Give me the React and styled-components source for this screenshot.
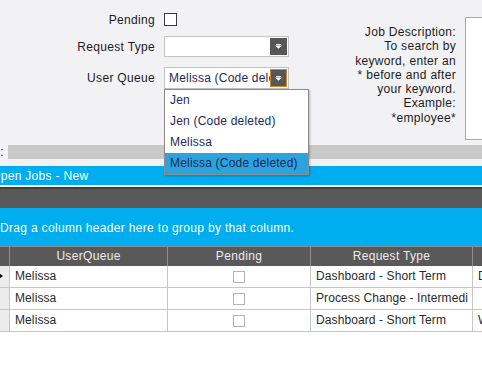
import styled, { createGlobalStyle } from "styled-components";

const GlobalStyle = createGlobalStyle`
	html, body {
		margin: 0;
		padding: 0;
		background: #ffffff;
	}
	body {
		font-family: "Liberation Sans", Arial, sans-serif;
		font-size: 12px;
		letter-spacing: 0.32px;
	}
`;

const queueOptions = ["Jen", "Jen (Code deleted)", "Melissa", "Melissa (Code deleted)"];

const jobs = [
	{ queue: "Melissa", type: "Dashboard - Short Term", extra: "D", current: true },
	{ queue: "Melissa", type: "Process Change - Intermedi", extra: "" },
	{ queue: "Melissa", type: "Dashboard - Short Term", extra: "W" },
];

const columns = ["UserQueue", "Pending", "Request Type", ""];

const ArrowIcon = () => (
	<svg width="7" height="5" viewBox="0 0 7 5">
		<rect x="1" y="0" width="5" height="1" fill="#ffffff" />
		<polygon points="0,1.5 7,1.5 3.5,4.8" fill="#ffffff" />
	</svg>
);

const Select = ({ value, focused, children }) => (
	<SelectBox $focused={focused}>
		<SelectText>{value}</SelectText>
		<DropButton $focused={focused}>
			<ArrowIcon />
		</DropButton>
		{children}
	</SelectBox>
);

const App = () => {
	return (
		<>
			<GlobalStyle />
			<Page>
				<FormArea>
					<FieldGrid>
						<Label>Pending</Label>
						<Cell>
							<CheckBox />
						</Cell>
						<Label>Request Type</Label>
						<Select value="" />
						<Label>User Queue</Label>
						<Select value="Melissa (Code deleted)" focused>
							<DropMenu>
								{queueOptions.map((opt, i) => (
									<MenuItem key={opt} $active={i === queueOptions.length - 1}>
										{opt}
									</MenuItem>
								))}
							</DropMenu>
						</Select>
					</FieldGrid>
					<JobHelp>
						Job Description:
						<br />
						To search by
						<br />
						keyword, enter an
						<br />* before and after
						<br />
						your keyword.
						<br />
						Example:
						<br />
						*employee*
					</JobHelp>
					<TextBox />
				</FormArea>
				<FilterRow>
					<FilterLabel>
						<span>Status:</span>
					</FilterLabel>
					<FilterBar />
				</FilterRow>
				<TitleBar>
					<TitleText>Open Jobs - New</TitleText>
				</TitleBar>
				<ToolBar />
				<GroupPanel>Drag a column header here to group by that column.</GroupPanel>
				<Table>
					<HeadCell />
					{columns.map((c, i) => (
						<HeadCell key={i}>{c}</HeadCell>
					))}
					{jobs.map((job, i) => (
						<Row key={i}>
							<Indicator>{job.current && <RowArrow />}</Indicator>
							<DataCell>{job.queue}</DataCell>
							<DataCell $center>
								<GridCheck />
							</DataCell>
							<DataCell>{job.type}</DataCell>
							<DataCell>{job.extra}</DataCell>
						</Row>
					))}
				</Table>
			</Page>
		</>
	);
};

const Page = styled.div`
	width: 482px;
	height: 375px;
	overflow: hidden;
	background: #ffffff;
	color: #222222;
	position: relative;
`;

const FormArea = styled.div`
	display: flex;
	height: 145px;
	background: #f2f2f4;
`;

const FieldGrid = styled.div`
	display: grid;
	grid-template-columns: 155px 125px;
	grid-template-rows: 13px 21px 22px;
	column-gap: 9px;
	row-gap: 10px;
	padding-top: 13px;
	flex-shrink: 0;
	align-items: center;
	align-content: start;
`;

const Label = styled.div`
	text-align: right;
	color: #1c1c1c;
	white-space: nowrap;
	line-height: 14px;
`;

const Cell = styled.div`
	display: flex;
	align-items: center;
	height: 100%;
`;

const CheckBox = styled.div`
	width: 11px;
	height: 11px;
	border: 1px solid #3a3a3a;
	background: #ffffff;
`;

const SelectBox = styled.div`
	position: relative;
	display: flex;
	height: 100%;
	box-sizing: border-box;
	border: 1px solid #c4c4c4;
	background: #ffffff;
	padding: 1px;
`;

const SelectText = styled.div`
	flex: 1;
	overflow: hidden;
	white-space: nowrap;
	color: #1f2a55;
	padding-left: 3px;
	line-height: 18px;
	letter-spacing: 0.2px;
`;

const DropButton = styled.div`
	width: 17px;
	flex-shrink: 0;
	box-sizing: border-box;
	background: #575757;
	border: 1px solid ${({ $focused }) => ($focused ? "#d08a2c" : "#575757")};
	display: flex;
	align-items: center;
	justify-content: center;
`;

const DropMenu = styled.div`
	position: absolute;
	top: 21px;
	left: -1px;
	width: 145px;
	box-sizing: border-box;
	background: #ffffff;
	border: 1px solid #8c8c8c;
	box-shadow: 1px 1px 2px rgba(0, 0, 0, 0.25);
	z-index: 10;
`;

const MenuItem = styled.div`
	height: 21px;
	line-height: 21px;
	padding-left: 5px;
	color: #1f2a55;
	white-space: nowrap;
	letter-spacing: 0.2px;
	background: ${({ $active }) => ($active ? "#2aa3de" : "#ffffff")};
`;

const JobHelp = styled.div`
	width: 167px;
	flex-shrink: 0;
	text-align: right;
	padding-top: 25px;
	line-height: 14.3px;
	color: #1c1c1c;
`;

const TextBox = styled.div`
	width: 40px;
	height: 123px;
	flex-shrink: 0;
	margin-left: 9px;
	margin-top: 17px;
	box-sizing: border-box;
	border: 1px solid #a8a8a8;
	background: #ffffff;
`;

const FilterRow = styled.div`
	display: flex;
	height: 21px;
	background: #f2f2f4;
	align-items: flex-start;
`;

const FilterLabel = styled.div`
	width: 4px;
	margin-right: 4px;
	flex-shrink: 0;
	display: flex;
	justify-content: flex-end;
	overflow: hidden;
	white-space: nowrap;
	line-height: 14px;
	color: #1c1c1c;
`;

const FilterBar = styled.div`
	flex: 1;
	height: 14px;
	background: #c9c9c9;
`;

const TitleBar = styled.div`
	height: 19px;
	background: #00adef;
	border-bottom: 2px solid #ffffff;
	display: flex;
	align-items: center;
	overflow: hidden;
`;

const TitleText = styled.span`
	color: #ffffff;
	margin-left: -9px;
	white-space: nowrap;
`;

const ToolBar = styled.div`
	height: 19px;
	background: #595959;
	border-top: 2px solid #3e3e3e;
`;

const GroupPanel = styled.div`
	height: 38px;
	background: #00adef;
	color: #ffffff;
	display: flex;
	align-items: center;
	padding-top: 1px;
	box-sizing: border-box;
	white-space: nowrap;
`;

const Table = styled.div`
	display: grid;
	grid-template-columns: 10px 158px 143px 162px 60px;
	grid-auto-rows: 22px;
	grid-template-rows: 20px;
`;

const HeadCell = styled.div`
	background: #595959;
	color: #ececec;
	text-align: center;
	line-height: 19px;
	border-top: 1px solid #8e8e8e;
	border-right: 1px solid #8e8e8e;
	box-sizing: border-box;
	white-space: nowrap;
	overflow: hidden;
`;

const Row = styled.div`
	display: contents;
`;

const Indicator = styled.div`
	background: #ececec;
	border-right: 1px solid #c6c6c6;
	border-bottom: 1px solid #c6c6c6;
	box-sizing: border-box;
	position: relative;
	overflow: hidden;
`;

const RowArrow = styled.div`
	position: absolute;
	left: -1px;
	top: 7px;
	width: 0;
	height: 0;
	border-top: 3px solid transparent;
	border-bottom: 3px solid transparent;
	border-left: 4px solid #111111;
`;

const DataCell = styled.div`
	background: #ffffff;
	border-right: 1px solid #c6c6c6;
	border-bottom: 1px solid #c6c6c6;
	box-sizing: border-box;
	padding-left: 5px;
	line-height: 21px;
	white-space: nowrap;
	overflow: hidden;
	color: #2a2a2a;
	letter-spacing: 0.1px;
	display: flex;
	align-items: center;
	justify-content: ${({ $center }) => ($center ? "center" : "flex-start")};
`;

const GridCheck = styled.div`
	width: 10px;
	height: 10px;
	border: 1px solid #b4b4b4;
	background: #ffffff;
	margin-left: -5px;
	margin-top: 1px;
`;

export default App;
